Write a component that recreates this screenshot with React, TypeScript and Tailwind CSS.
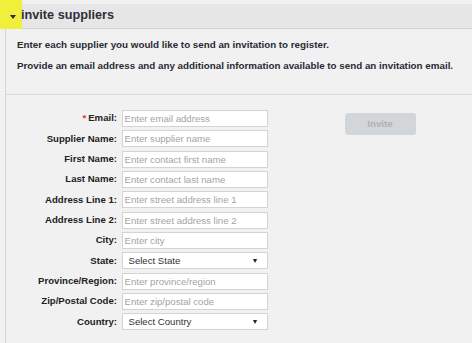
import { ChangeEvent } from 'react';

type Field = {
  label: string;
  placeholder?: string;
  select?: string;
  required?: boolean;
};

const fields: Field[] = [
  { label: 'Email:', placeholder: 'Enter email address', required: true },
  { label: 'Supplier Name:', placeholder: 'Enter supplier name' },
  { label: 'First Name:', placeholder: 'Enter contact first name' },
  { label: 'Last Name:', placeholder: 'Enter contact last name' },
  { label: 'Address Line 1:', placeholder: 'Enter street address line 1' },
  { label: 'Address Line 2:', placeholder: 'Enter street address line 2' },
  { label: 'City:', placeholder: 'Enter city' },
  { label: 'State:', select: 'Select State' },
  { label: 'Province/Region:', placeholder: 'Enter province/region' },
  { label: 'Zip/Postal Code:', placeholder: 'Enter zip/postal code' },
  { label: 'Country:', select: 'Select Country' },
];

function FieldRow({ field }: { field: Field }) {
  return (
    <div className="flex items-center h-[17px]">
      <label className="w-[111px] text-right font-bold text-[9.6px] text-[#222] whitespace-nowrap">
        {field.required && <span className="text-[#e0333a] mr-[2px]">*</span>}
        {field.label}
      </label>
      {field.select ? (
        <div className="ml-[4.5px] w-[146px] h-[17px] bg-white border border-[#d4d4d4] flex items-center justify-between pl-[6px] pr-[8px]">
          <span className="text-[9.6px] text-[#333]">{field.select}</span>
          <span className="text-[7px] text-[#222] leading-none">▼</span>
        </div>
      ) : (
        <input
          className="ml-[4.5px] w-[146px] h-[17px] bg-white border border-[#d4d4d4] px-[2px] text-[9.6px] text-[#333] placeholder:text-[#a4a4a4] outline-none"
          placeholder={field.placeholder}
          onChange={(e: ChangeEvent<HTMLInputElement>) => e.target.value}
        />
      )}
    </div>
  );
}

export default function App() {
  return (
    <div
      className="relative w-[472px] h-[343px] bg-[#f1f1f1] overflow-hidden"
      style={{ fontFamily: '"Liberation Sans", Arial, sans-serif' }}
    >
      {/* highlighter mark over the toggle */}
      <div className="absolute left-0 top-0 z-[1] w-[22px] h-[29px] bg-[#f0f03c]" />

      <div className="pt-[4px]">
        <div className="relative h-[25px] bg-[#e6e6e6] border-b border-[#d2d2d2] flex items-center pl-[10px]">
          <span className="relative z-[2] w-0 h-0 border-l-[3.5px] border-r-[3.5px] border-t-[4px] border-l-transparent border-r-transparent border-t-[#2a2a2a] mt-[1px]" />
          <h1 className="relative z-[2] ml-[5px] text-[12.7px] font-bold text-[#2e2e3a]">invite suppliers</h1>
        </div>

        <div className="ml-[5px] border-l-[1.5px] border-[#d6d6d6] h-[314px]">
          <div className="pl-[11px] pt-[10px] h-[66px] border-b border-[#d8d8d8] text-[9.8px] font-bold text-[#2a2a35]">
            <p className="leading-[12px]">Enter each supplier you would like to send an invitation to register.</p>
            <p className="leading-[12px] mt-[9px]">
              Provide an email address and any additional information available to send an invitation email.
            </p>
          </div>

          <div className="flex pt-[15px]">
            <div className="flex flex-col gap-[3.35px]">
              {fields.map((f) => (
                <FieldRow key={f.label} field={f} />
              ))}
            </div>
            <div className="ml-[77px]">
              <button className="w-[71px] h-[22px] rounded-[3px] bg-[#d3d6d9] text-[#aeb1b4] font-bold text-[9.8px]">
                Invite
              </button>
            </div>
          </div>
        </div>
      </div>
    </div>
  );
}
